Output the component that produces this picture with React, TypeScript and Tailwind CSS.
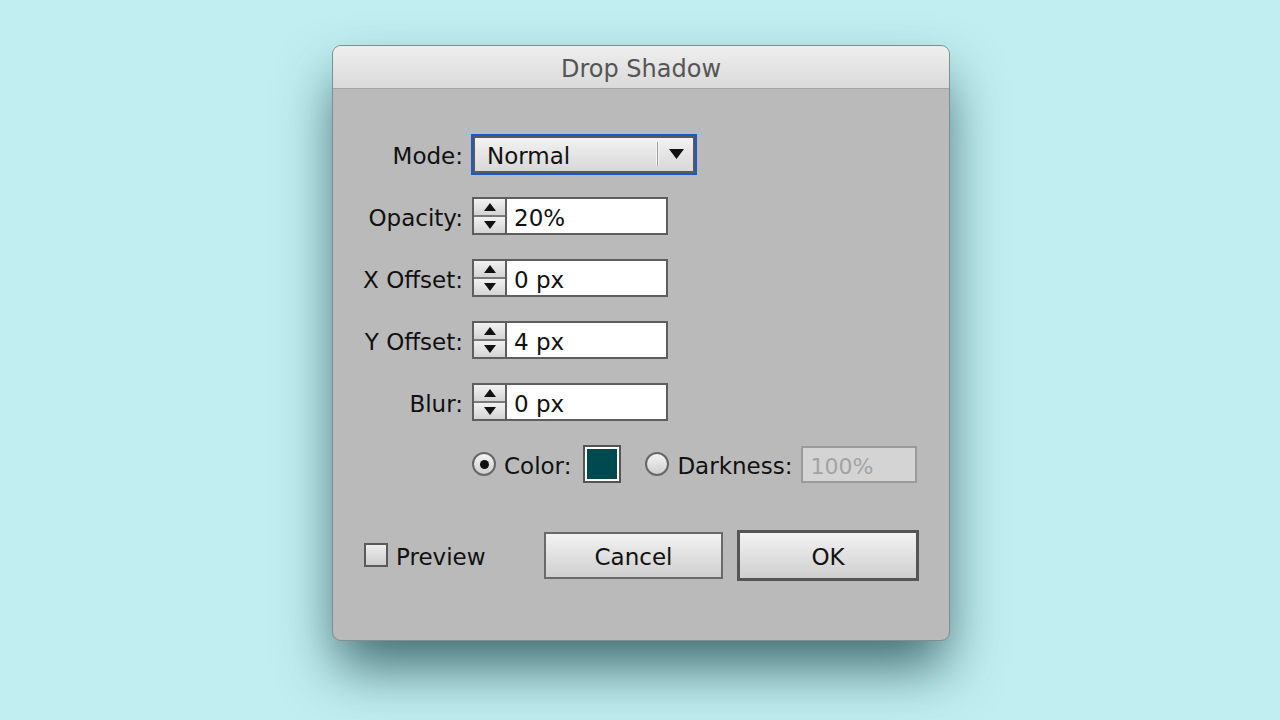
import React from 'react';

const font = { fontFamily: '"DejaVu Sans", Verdana, sans-serif' };

const Stepper: React.FC<{ value: string }> = ({ value }) => (
  <div className="ml-px flex h-[38px] w-[196px] border-2 border-[#5e5e5e] bg-white">
    <div className="flex w-[33px] flex-col border-r-2 border-[#5e5e5e]">
      <div className="flex flex-1 items-center justify-center border-b-2 border-[#7a7a7a] bg-gradient-to-b from-[#f2f2f2] to-[#d4d4d4]">
        <svg width="12" height="8" viewBox="0 0 12 8"><path d="M6 0 L12 8 L0 8 Z" fill="#111" /></svg>
      </div>
      <div className="flex flex-1 items-center justify-center bg-gradient-to-b from-[#f2f2f2] to-[#d4d4d4]">
        <svg width="12" height="8" viewBox="0 0 12 8"><path d="M0 0 L12 0 L6 8 Z" fill="#111" /></svg>
      </div>
    </div>
    <div className="flex flex-1 items-center pl-[7px] pt-[5px] text-[23px] text-[#111]">{value}</div>
  </div>
);

const Radio: React.FC<{ checked?: boolean }> = ({ checked }) => (
  <div className="flex h-[24px] w-[24px] items-center justify-center rounded-full border-2 border-[#666] bg-gradient-to-b from-[#f4f4f4] to-[#cfcfcf]">
    {checked && <div className="h-[9px] w-[9px] rounded-full bg-[#111]" />}
  </div>
);

const Label: React.FC<{ children: React.ReactNode }> = ({ children }) => (
  <div className="pt-[5px] text-right text-[23px] text-[#111]">{children}</div>
);

export default function App() {
  const rows = [
    { label: 'Opacity:', value: '20%' },
    { label: 'X Offset:', value: '0 px' },
    { label: 'Y Offset:', value: '4 px' },
    { label: 'Blur:', value: '0 px' },
  ];

  return (
    <div className="flex h-screen w-full justify-center overflow-hidden bg-[#c1eff1] pl-[2px] pt-[45px]" style={font}>
      <div className="flex h-[596px] w-[618px] flex-col overflow-hidden rounded-[9px] border border-[#7f8e8f] bg-[#bababa] shadow-[0_30px_55px_-4px_rgba(10,50,55,0.7)]">
        {/* Title bar */}
        <div className="flex h-[43px] shrink-0 items-center justify-center border-b border-[#a6a6a6] bg-gradient-to-b from-[#efefef] to-[#dadada] pt-[4px] text-[24px] text-[#555]">
          Drop Shadow
        </div>

        {/* Form */}
        <div className="grid grid-cols-[130px_auto] gap-x-2 pt-[34px]">
          <div className="flex h-[62px] items-center justify-end">
            <Label>Mode:</Label>
          </div>
          <div className="flex h-[62px] items-center">
            <div className="h-[41px] w-[226px] border-2 border-[#1d55d3]">
              <div className="flex h-full items-center border-2 border-[#595959] bg-gradient-to-b from-[#f2f2f2] to-[#d8d8d8] pl-[12px] text-[23px] text-[#111]">
                <span className="flex-1 pt-[5px]">Normal</span>
                <div className="mr-[10px] h-[24px] w-[3px] border-x border-x-[#f6f6f6] bg-[#9a9a9a]" />
                <svg className="mr-[9px]" width="15" height="10" viewBox="0 0 15 10"><path d="M0 0 L15 0 L7.5 10 Z" fill="#111" /></svg>
              </div>
            </div>
          </div>

          {rows.map((r) => (
            <React.Fragment key={r.label}>
              <div className="flex h-[62px] items-center justify-end">
                <Label>{r.label}</Label>
              </div>
              <div className="flex h-[62px] items-center">
                <Stepper value={r.value} />
              </div>
            </React.Fragment>
          ))}

          <div />
          <div className="flex h-[62px] items-center pl-px text-[23px] text-[#111]">
            <Radio checked />
            <span className="ml-[8px] pt-[5px]">Color:</span>
            <div className="ml-[12px] h-[38px] w-[38px] border-2 border-[#555] bg-white p-[2px]">
              <div className="h-full w-full bg-[#004a4f]" />
            </div>
            <div className="ml-[24px]">
              <Radio />
            </div>
            <span className="ml-[8px] pt-[5px]">Darkness:</span>
            <div className="ml-[9px] flex h-[37px] w-[116px] items-center border-2 border-[#9a9a9a] bg-[#d4d4d4] pl-[7px] pt-[5px] text-[22px] text-[#a3a3a3]">
              100%
            </div>
          </div>
        </div>

        {/* Buttons */}
        <div className="mt-[34px] flex h-[52px] items-center pl-[31px] pr-[30px]">
          <div className="h-[24px] w-[24px] border-2 border-[#5a5a5a] bg-gradient-to-b from-[#eeeeee] to-[#cccccc]" />
          <span className="ml-[8px] pt-[5px] text-[23px] text-[#111]">Preview</span>
          <button className="ml-auto flex h-[47px] w-[179px] items-center justify-center border-2 border-[#6a6a6a] bg-gradient-to-b from-[#f3f3f3] to-[#cfcfcf] pt-[5px] text-[23px] text-[#111]">
            Cancel
          </button>
          <button className="ml-[14px] flex h-[51px] w-[182px] items-center justify-center border-[3px] border-[#555] bg-gradient-to-b from-[#f3f3f3] to-[#cfcfcf] pt-[5px] text-[23px] text-[#111]">
            OK
          </button>
        </div>
      </div>
    </div>
  );
}
